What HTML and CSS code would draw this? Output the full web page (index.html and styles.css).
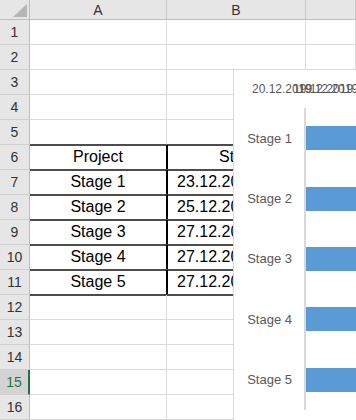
FILE: index.html
```html
<!DOCTYPE html>
<html lang="en">
<head>
  <meta charset="UTF-8">
  <meta name="viewport" content="width=device-width, initial-scale=1.0">
  <title>Project stages</title>
  <link rel="stylesheet" href="styles.css">
</head>
<body>
<div class="sheet">
  <div class="c corner"><span class="tri"></span></div>
  <div class="c ch">A</div>
  <div class="c ch">B</div>
  <div class="c ch"></div>

  <div class="c rh">1</div><div class="c"></div><div class="c"></div><div class="c"></div>
  <div class="c rh">2</div><div class="c"></div><div class="c"></div><div class="c"></div>
  <div class="c rh">3</div><div class="c"></div><div class="c"></div><div class="c"></div>
  <div class="c rh">4</div><div class="c"></div><div class="c"></div><div class="c"></div>
  <div class="c rh">5</div><div class="c top"></div><div class="c top"></div><div class="c"></div>

  <div class="c rh">6</div><div class="c tb ta">Project</div><div class="c tb mid">Start</div><div class="c"></div>
  <div class="c rh">7</div><div class="c tb ta">Stage 1</div><div class="c tb date">23.12.2019</div><div class="c"></div>
  <div class="c rh">8</div><div class="c tb ta">Stage 2</div><div class="c tb date">25.12.2019</div><div class="c"></div>
  <div class="c rh">9</div><div class="c tb ta">Stage 3</div><div class="c tb date">27.12.2019</div><div class="c"></div>
  <div class="c rh">10</div><div class="c tb ta">Stage 4</div><div class="c tb date">27.12.2019</div><div class="c"></div>
  <div class="c rh">11</div><div class="c tb ta">Stage 5</div><div class="c tb date">27.12.2019</div><div class="c"></div>

  <div class="c rh">12</div><div class="c"></div><div class="c"></div><div class="c"></div>
  <div class="c rh">13</div><div class="c"></div><div class="c"></div><div class="c"></div>
  <div class="c rh">14</div><div class="c"></div><div class="c"></div><div class="c"></div>
  <div class="c rh sel">15</div><div class="c"></div><div class="c"></div><div class="c"></div>
  <div class="c rh">16</div><div class="c"></div><div class="c"></div><div class="c"></div>
</div>

<!-- gantt chart floating over the sheet -->
<div class="chart">
  <div class="dates">
    <span class="dl d1">20.12.2019</span>
    <span class="dl d2">19.12.2019</span>
    <span class="dl d3">19.12.2019</span>
  </div>
  <div class="plot">
    <div class="row"><div class="lbl">Stage 1</div><div class="track"><div class="bar"></div></div></div>
    <div class="row"><div class="lbl">Stage 2</div><div class="track"><div class="bar"></div></div></div>
    <div class="row"><div class="lbl">Stage 3</div><div class="track"><div class="bar"></div></div></div>
    <div class="row"><div class="lbl">Stage 4</div><div class="track"><div class="bar"></div></div></div>
    <div class="row"><div class="lbl">Stage 5</div><div class="track"><div class="bar"></div></div></div>
  </div>
</div>
</body>
</html>
```

FILE: styles.css
```css
body {
  margin: 0;
  overflow: hidden;
  background: #fff;
  font-family: "Liberation Sans", Arial, sans-serif;
}

.sheet {
  display: grid;
  grid-template-columns: 30px 137px 139px 1fr;
  grid-template-rows: 20px repeat(16, 25px);
  height: 420px;
}

.c {
  box-sizing: border-box;
  border-right: 1px solid #dadada;
  border-bottom: 1px solid #dadada;
  display: flex;
  align-items: center;
  font-size: 16px;
  color: #000;
  white-space: nowrap;
  overflow: visible;
}

.corner {
  background: #e6e6e6;
  border-right-color: #bdbdbd;
  border-bottom-color: #bdbdbd;
  position: relative;
}

.tri {
  position: absolute;
  right: 2px;
  bottom: 2px;
  width: 0;
  height: 0;
  border-left: 14px solid transparent;
  border-bottom: 13px solid #b5b5b5;
}

.ch {
  background: #e6e6e6;
  border-bottom-color: #bdbdbd;
  border-right-color: #c8c8c8;
  justify-content: center;
  font-size: 14px;
  color: #333;
}

.rh {
  background: #e6e6e6;
  border-right-color: #bdbdbd;
  border-bottom-color: #d0d0d0;
  justify-content: center;
  font-size: 14px;
  color: #333;
}

.rh.sel {
  background: #d3d3d3;
  color: #217346;
  border-right: 2px solid #217346;
}

/* table borders */
.top {
  border-bottom-color: #4d4d4d;
  box-shadow: 0 1px 0 #4d4d4d;
}

.tb {
  border-bottom-color: #4d4d4d;
  box-shadow: 0 1px 0 #4d4d4d;
}

.ta {
  justify-content: center;
  border-right-color: #000;
  box-shadow: 0 1px 0 #4d4d4d, 1px 0 0 #000;
}

.mid {
  justify-content: center;
}

.date {
  padding-left: 10px;
}

/* chart */
.chart {
  position: absolute;
  left: 233px;
  top: 69px;
  right: 0;
  bottom: 0;
  overflow: hidden;
  background: #fff;
  border-left: 1px solid #d9d9d9;
  border-top: 1px solid #d9d9d9;
  color: #595959;
}

.dates {
  position: relative;
  height: 38px;
  font-size: 12px;
}

.dl {
  position: absolute;
  top: 12px;
  white-space: nowrap;
}

.d1 { left: 18px; }
.d2 { left: 59px; }
.d3 { left: 64px; }

.plot {
  display: grid;
  grid-template-rows: repeat(5, 1fr);
  height: 302px;
}

.row {
  display: flex;
}

.lbl {
  width: 70px;
  box-sizing: border-box;
  padding-right: 12px;
  display: flex;
  align-items: center;
  justify-content: flex-end;
  font-size: 13px;
}

.track {
  flex: 1;
  border-left: 2px solid #d9d9d9;
  display: flex;
  align-items: center;
}

.bar {
  width: 100%;
  height: 24px;
  background: #5b9bd5;
}
```
